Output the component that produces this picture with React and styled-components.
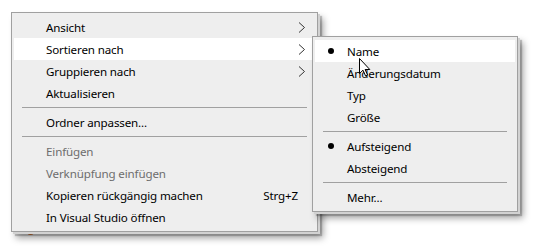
import React from 'react';
import styled, { createGlobalStyle } from 'styled-components';

const GlobalStyle = createGlobalStyle`
  html, body {
    margin: 0;
    padding: 0;
    background: #ffffff;
  }
  body {
    font-family: 'Noto Sans', 'Open Sans', sans-serif;
  }
`;

const Desktop = styled.div`
  position: relative;
  width: 541px;
  height: 252px;
  overflow: hidden;
  background: #ffffff;
`;

const Menu = styled.div`
  position: absolute;
  top: ${({ $top }) => $top}px;
  left: ${({ $left }) => $left}px;
  width: ${({ $width }) => $width}px;
  box-sizing: border-box;
  padding: 3px 2px;
  background: #eeeeee;
  border: 1px solid #a0a0a0;
  box-shadow:
    2px 2px 0 #d2d2d2,
    4px 4px 1px rgba(0, 0, 0, 0.2),
    5px 6px 7px rgba(0, 0, 0, 0.38);
  font-size: 11.6px;
  letter-spacing: -0.15px;
  color: #000000;
`;

const Item = styled.div`
  display: flex;
  align-items: center;
  height: 22px;
  line-height: 22px;
  background: ${({ $active }) => ($active ? '#ffffff' : 'transparent')};
  color: ${({ $disabled }) => ($disabled ? '#6d6d6d' : '#000000')};
  white-space: nowrap;
`;

const Gutter = styled.span`
  flex: 0 0 32px;
  display: flex;
  align-items: center;
  justify-content: center;
`;

const Bullet = styled.span`
  width: 6px;
  height: 6px;
  border-radius: 50%;
  background: #000000;
`;

const Label = styled.span`
  flex: 1;
  padding-top: 2px;
`;

const Shortcut = styled.span`
  margin-right: 17px;
  padding-top: 2px;
`;

const Chevron = styled.svg`
  flex: 0 0 auto;
  margin-right: 9px;
`;

const Separator = styled.div`
  height: 1px;
  margin: 3px 8px;
  background: #a0a0a0;
`;

const Cursor = styled.svg`
  position: absolute;
  left: 359px;
  top: 58px;
`;

const Blob = styled.span`
  position: absolute;
  left: 26px;
  top: 226px;
  width: 9px;
  height: 9px;
  border-radius: 50%;
  background: #e8823a;
`;

const Arrow = () => (
  <Chevron width="8" height="11" viewBox="0 0 8 11">
    <path d="M1 0.5 L6.5 5.5 L1 10.5" fill="none" stroke="#333" strokeWidth="1" />
  </Chevron>
);

const MenuItem = ({ label, checked, submenu, shortcut, active, disabled }) => (
  <Item $active={active} $disabled={disabled}>
    <Gutter>{checked && <Bullet />}</Gutter>
    <Label>{label}</Label>
    {shortcut && <Shortcut>{shortcut}</Shortcut>}
    {submenu && <Arrow />}
  </Item>
);

export default function App() {
  return (
    <Desktop>
      <GlobalStyle />
      <Blob />
      <Menu $top={12} $left={11} $width={307}>
        <MenuItem label="Ansicht" submenu />
        <MenuItem label="Sortieren nach" submenu active />
        <MenuItem label="Gruppieren nach" submenu />
        <MenuItem label="Aktualisieren" />
        <Separator />
        <MenuItem label="Ordner anpassen..." />
        <Separator />
        <MenuItem label="Einfügen" disabled />
        <MenuItem label="Verknüpfung einfügen" disabled />
        <MenuItem label="Kopieren rückgängig machen" shortcut="Strg+Z" />
        <MenuItem label="In Visual Studio öffnen" />
      </Menu>
      <Menu $top={36} $left={312} $width={206}>
        <MenuItem label="Name" checked active />
        <MenuItem label="Änderungsdatum" />
        <MenuItem label="Typ" />
        <MenuItem label="Größe" />
        <Separator />
        <MenuItem label="Aufsteigend" checked />
        <MenuItem label="Absteigend" />
        <Separator />
        <MenuItem label="Mehr..." />
      </Menu>
      <Cursor width="12" height="19" viewBox="0 0 12 19">
        <path
          d="M0.5 0.5 L0.5 15.5 L4 12.2 L6.6 18 L8.6 17.1 L6.1 11.5 L10.8 11.5 Z"
          fill="#ffffff"
          stroke="#000000"
          strokeWidth="1"
          strokeLinejoin="round"
        />
      </Cursor>
    </Desktop>
  );
}
